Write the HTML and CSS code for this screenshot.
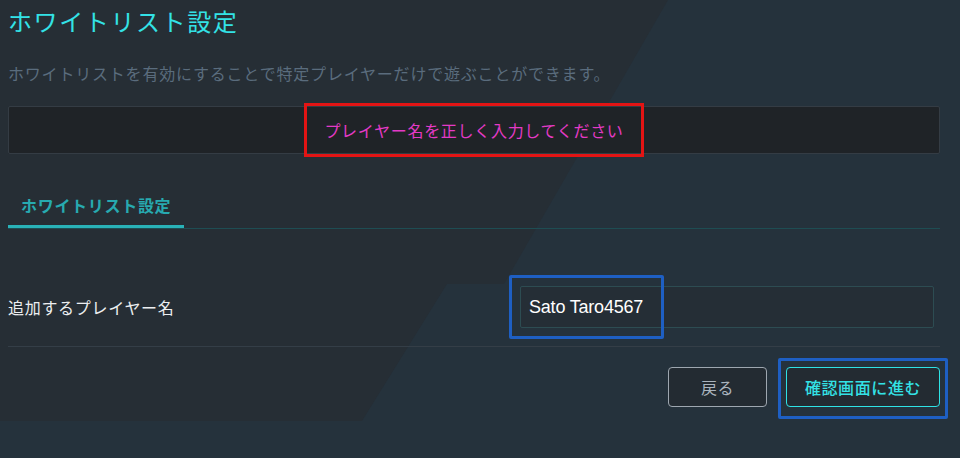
FILE: index.html
```html
<!DOCTYPE html>
<html lang="ja">
<head>
<meta charset="utf-8">
<title>ホワイトリスト設定</title>
<link rel="stylesheet" href="styles.css">
</head>
<body>
<main class="page">
  <h1 class="title">ホワイトリスト設定</h1>
  <p class="lead">ホワイトリストを有効にすることで特定プレイヤーだけで遊ぶことができます。</p>
  <div class="alert"><span class="alert-text">プレイヤー名を正しく入力してください</span></div>
  <nav class="tabs"><span class="tab is-active">ホワイトリスト設定</span></nav>
  <div class="form-row">
    <label class="label" for="player">追加するプレイヤー名</label>
    <div class="field">
      <input id="player" class="input" type="text" value="Sato Taro4567">
      <span class="mark mark-input"></span>
    </div>
  </div>
  <div class="actions">
    <button class="btn btn-back" type="button">戻る</button>
    <span class="btn-wrap">
      <button class="btn btn-next" type="button">確認画面に進む</button>
      <span class="mark mark-next"></span>
    </span>
  </div>
</main>
</body>
</html>
```
FILE: styles.css
```css
html, body {
  margin: 0;
  padding: 0;
}
body {
  width: 960px;
  height: 458px;
  overflow: hidden;
  position: relative;
  background: #25323c;
  font-family: "Noto Sans CJK JP", "Noto Sans", sans-serif;
  color: #e6e9ec;
}
body::before,
body::after {
  content: "";
  position: absolute;
  left: 0;
  background: #262e35;
  z-index: 0;
}
body::before {
  top: 0;
  width: 668px;
  height: 284px;
  clip-path: polygon(0 0, 668px 0, 504px 284px, 0 284px);
}
body::after {
  top: 284px;
  width: 447px;
  height: 137px;
  clip-path: polygon(0 0, 447px 0, 362px 137px, 0 137px);
}
.page {
  position: relative;
  z-index: 1;
  padding: 0 20px 0 8px;
}
.title {
  margin: 4px 0 0;
  font-size: 24px;
  font-weight: 400;
  line-height: 34px;
  letter-spacing: 1.6px;
  color: #33e2e6;
}
.lead {
  margin: 23px 0 0;
  font-size: 16px;
  line-height: 24px;
  letter-spacing: 0.8px;
  color: #5a6c7d;
}
.alert {
  margin-top: 21px;
  height: 48px;
  box-sizing: border-box;
  border: 1px solid #343c44;
  border-radius: 2px;
  background: #1f2327;
  display: flex;
  justify-content: center;
  align-items: center;
}
.alert-text {
  height: 48px;
  margin: -1px 0;
  padding: 0 17px;
  display: flex;
  align-items: center;
  font-size: 16px;
  letter-spacing: 0.7px;
  color: #e43ac6;
  outline: 3px solid #e31414;
}
.tabs {
  margin-top: 28px;
  display: flex;
  border-bottom: 1px solid #1e4d53;
}
.tab {
  padding: 11px 13px 8px;
  font-size: 16px;
  line-height: 24px;
  font-weight: 700;
  letter-spacing: 0.7px;
  color: #27aab0;
  border-bottom: 3px solid #29b2b8;
}
.form-row {
  display: flex;
  align-items: center;
  padding: 57px 0 18px;
  border-bottom: 1px solid #343e47;
}
.label {
  flex: 0 0 512px;
  font-size: 16px;
  letter-spacing: 0.7px;
  color: #eceef0;
}
.field {
  position: relative;
  display: flex;
}
.input {
  width: 414px;
  height: 42px;
  box-sizing: border-box;
  margin: 0;
  padding: 0 0 0 8px;
  border: 1px solid #2d4c52;
  border-radius: 2px;
  background: #252e36;
  font-family: "Liberation Sans", Arial, sans-serif;
  font-size: 18px;
  letter-spacing: -0.2px;
  color: #ffffff;
  outline: none;
}
.mark {
  position: absolute;
  box-sizing: border-box;
  border: 3px solid #1e5fc3;
  border-radius: 2px;
  pointer-events: none;
}
.mark-input {
  left: -11px;
  top: -11px;
  width: 155px;
  height: 64px;
}
.actions {
  display: flex;
  justify-content: flex-end;
  align-items: center;
  gap: 19px;
  margin-top: 20px;
}
.btn {
  height: 40px;
  box-sizing: border-box;
  border-radius: 4px;
  font-family: "Noto Sans CJK JP", "Noto Sans", sans-serif;
  font-size: 16px;
  letter-spacing: 0.6px;
  cursor: pointer;
  padding: 0;
}
.btn-back {
  width: 99px;
  border: 1px solid #9ea7b0;
  background: #232b32;
  color: #aab4be;
}
.btn-wrap {
  position: relative;
  display: flex;
}
.btn-next {
  width: 154px;
  border: 1px solid #2fe2e5;
  background: #232b32;
  color: #33e2e6;
  font-weight: 500;
}
.mark-next {
  left: -8px;
  top: -9px;
  right: -8px;
  bottom: -12px;
}
```
